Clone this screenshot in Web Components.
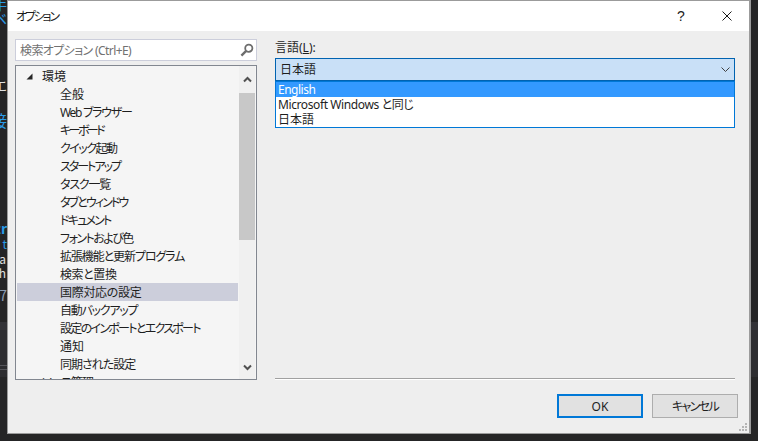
<!DOCTYPE html>
<html lang="ja">
<head>
<meta charset="utf-8">
<title>オプション</title>
<style>
html, body { margin: 0; height: 100%; background: #252526; overflow: hidden; }
body { font: 12px/15px "Noto Sans", "Noto Sans CJK JP", sans-serif; font-feature-settings: "palt"; color: #1e1e1e; }
</style>
</head>
<body>
<ide-backdrop>
  <opt-dialog heading="オプション">
    <opt-search slot="left" placeholder="検索オプション (Ctrl+E)"></opt-search>
    <opt-tree slot="left">
      <opt-tree-item level="0" expanded>環境</opt-tree-item>
      <opt-tree-item>全般</opt-tree-item>
      <opt-tree-item style="letter-spacing:-1.3px">Web ブラウザー</opt-tree-item>
      <opt-tree-item style="letter-spacing:-2.6px">キーボード</opt-tree-item>
      <opt-tree-item style="letter-spacing:-1.5px">クイック起動</opt-tree-item>
      <opt-tree-item style="letter-spacing:-2px">スタートアップ</opt-tree-item>
      <opt-tree-item style="letter-spacing:-1.2px">タスク一覧</opt-tree-item>
      <opt-tree-item style="letter-spacing:-1.9px">タブとウィンドウ</opt-tree-item>
      <opt-tree-item style="letter-spacing:-1.8px">ドキュメント</opt-tree-item>
      <opt-tree-item style="letter-spacing:-1.5px">フォントおよび色</opt-tree-item>
      <opt-tree-item style="letter-spacing:-1.1px">拡張機能と更新プログラム</opt-tree-item>
      <opt-tree-item style="letter-spacing:-.4px">検索と置換</opt-tree-item>
      <opt-tree-item selected style="letter-spacing:-.3px">国際対応の設定</opt-tree-item>
      <opt-tree-item style="letter-spacing:-1.25px">自動バックアップ</opt-tree-item>
      <opt-tree-item style="letter-spacing:-1.7px">設定のインポートとエクスポート</opt-tree-item>
      <opt-tree-item>通知</opt-tree-item>
      <opt-tree-item style="letter-spacing:-1px">同期された設定</opt-tree-item>
      <opt-tree-item level="0" style="letter-spacing:-1px">ソース管理</opt-tree-item>
    </opt-tree>
    <opt-combo slot="right" value="日本語">
      <span slot="label">言語(<u>L</u>):</span>
      <opt-combo-item selected style="letter-spacing:-.5px">English</opt-combo-item>
      <opt-combo-item style="letter-spacing:-.4px">Microsoft Windows と同じ</opt-combo-item>
      <opt-combo-item>日本語</opt-combo-item>
    </opt-combo>
    <opt-button slot="buttons" primary>OK</opt-button>
    <opt-button slot="buttons" style="letter-spacing:-1.6px">キャンセル</opt-button>
  </opt-dialog>
</ide-backdrop>

<script>
class IdeBackdrop extends HTMLElement {
    constructor(){
        super();
        this.attachShadow({mode: 'open'});
        this.shadowRoot.innerHTML = `
            <style>
                :host { display: block; position: relative; width: 758px; height: 441px; overflow: hidden; background: #252526; }
                .t { position: absolute; right: 751px; white-space: nowrap; font: 14px/18px "Noto Sans CJK JP", sans-serif; }
                .blue { color: #2a9be8; }
                .white { color: #e0e0e0; }
                .band { position: absolute; left: 0; right: 0; background: #333337; }
                .dark { position: absolute; left: 0; right: 0; background: #2d2d30; }
                .tick { position: absolute; left: 0; width: 7px; height: 1px; background: #55555a; }
            </style>
            <div class="dark" style="top:330px;height:47px"></div>
            <div class="band" style="top:322px;height:8px"></div>
            <div class="tick" style="top:365px"></div>
            <div class="tick" style="top:369px"></div>
            <span class="t blue" style="top:-5px">手</span>
            <span class="t blue" style="top:9px">ベ</span>
            <span class="t white" style="top:76px">エ</span>
            <span class="t blue" style="top:111px;font-size:16px">接</span>
            <span class="t blue" style="top:219px;font-weight:700">tr</span>
            <span class="t blue" style="top:235px;font-size:12px">g t</span>
            <span class="t white" style="top:250px;font-size:12px;right:752px">a</span>
            <span class="t white" style="top:264px;font-size:12px;right:752px">h</span>
            <span class="t white" style="top:286px;color:#8a9ab0">7</span>
            <slot></slot>
        `;
    }
}
customElements.define('ide-backdrop', IdeBackdrop);

class OptDialog extends HTMLElement {
    constructor(){
        super();
        this.attachShadow({mode: 'open'});
        this.shadowRoot.innerHTML = `
            <style>
                :host { position: absolute; left: 7px; top: 0; width: 744px; height: 434px; box-sizing: border-box;
                    border: 1px solid #9b9b9b; border-right-width: 2px; border-bottom-width: 1px; background: #eeeeee;
                    display: flex; flex-direction: column; }
                header { height: 30px; background: #fff; display: flex; align-items: center; padding-left: 8px; font-size: 12px; flex: none; }
                header span { flex: 1; letter-spacing: -2.200px; }
                .cap { width: 36px; height: 30px; display: flex; align-items: center; justify-content: center; font: 14px "Liberation Sans", sans-serif; color: #222; }
                .main { flex: 1; display: flex; padding: 8px 14px 0 7px; gap: 18px; min-height: 0; }
                .left { width: 242px; flex: none; display: flex; flex-direction: column; gap: 4px; }
                .right { flex: 1; }
                .foot { flex: none; height: 55px; padding: 0 14px 0 267px; position: relative; }
                .foot hr { margin: 0; height: 1px; border: 0; background: #a0a0a0; box-shadow: 0 1px 0 #fff; }
                .btns { display: flex; justify-content: flex-end; gap: 9px; margin: 15px -3px 0 0; }
                .grip { position: absolute; right: 1px; bottom: 1px; }
            </style>
            <header>
                <span></span>
                <div class="cap">?</div>
                <div class="cap" style="margin-right:4px;margin-left:10px">
                    <svg width="10" height="10" viewBox="0 0 10 10"><path d="M.5.5l9 9M9.500.5l-9 9" stroke="#1a1a1a" fill="none"/></svg>
                </div>
            </header>
            <div class="main">
                <div class="left"><slot name="left"></slot></div>
                <div class="right"><slot name="right"></slot></div>
            </div>
            <div class="foot">
                <hr>
                <div class="btns"><slot name="buttons"></slot></div>
                <svg class="grip" width="9" height="9" viewBox="0 0 9 9" fill="#b4b4b4">
                    <rect x="6" y="0" width="2" height="2"/><rect x="3" y="3" width="2" height="2"/><rect x="6" y="3" width="2" height="2"/>
                    <rect x="0" y="6" width="2" height="2"/><rect x="3" y="6" width="2" height="2"/><rect x="6" y="6" width="2" height="2"/>
                </svg>
            </div>
        `;
        this.shadowRoot.querySelector('header span').textContent = this.getAttribute('heading');
    }
}
customElements.define('opt-dialog', OptDialog);

class OptSearch extends HTMLElement {
    constructor(){
        super();
        this.attachShadow({mode: 'open'});
        this.shadowRoot.innerHTML = `
            <style>
                :host { display: flex; align-items: center; box-sizing: border-box; height: 22px; border: 1px solid #cccedb; background: #fff; padding: 0 2px 0 4px; color: #717171; flex: none; }
                span { flex: 1; letter-spacing: -.6px; }
            </style>
            <span></span>
            <svg width="14" height="14" viewBox="0 0 14 14">
                <circle cx="8.8" cy="5.2" r="3.6" fill="none" stroke="#6d6d6d" stroke-width="1.8"/>
                <path d="M6.2 7.8L1.4 12.6" stroke="#6d6d6d" stroke-width="2.4" fill="none"/>
            </svg>
        `;
        this.shadowRoot.querySelector('span').textContent = this.getAttribute('placeholder');
    }
}
customElements.define('opt-search', OptSearch);

class OptTree extends HTMLElement {
    constructor(){
        super();
        this.attachShadow({mode: 'open'});
        this.shadowRoot.innerHTML = `
            <style>
                :host { display: flex; box-sizing: border-box; height: 315px; border: 1px solid #828790; background: #f5f5f5; overflow: hidden; flex: none; }
                .rows { flex: 1; min-width: 0; padding: 1px 0 0 1px; overflow: hidden; }
                .bar { width: 16px; flex: none; margin: 0 1px 0 1px; background: #f0f0f0; display: flex; flex-direction: column; }
                .arrow { height: 27px; flex: none; display: flex; align-items: center; justify-content: center; }
                .thumb { height: 147px; background: #c8c8c8; flex: none; }
                .rest { flex: 1; }
            </style>
            <div class="rows"><slot></slot></div>
            <div class="bar">
                <div class="arrow"><svg width="9" height="7" viewBox="0 0 9 7"><path d="M1 5.5l3.5-3.5 3.5 3.5" fill="none" stroke="#505050" stroke-width="2"/></svg></div>
                <div class="thumb"></div>
                <div class="rest"></div>
                <div class="arrow" style="height:24px"><svg width="9" height="7" viewBox="0 0 9 7"><path d="M1 1.5l3.5 3.5 3.5-3.5" fill="none" stroke="#505050" stroke-width="2"/></svg></div>
            </div>
        `;
    }
}
customElements.define('opt-tree', OptTree);

class OptTreeItem extends HTMLElement {
    constructor(){
        super();
        this.attachShadow({mode: 'open'});
        this.shadowRoot.innerHTML = `
            <style>
                :host { display: flex; align-items: center; height: 18px; white-space: nowrap; padding-left: 43px; }
                :host([level="0"]) { padding-left: 9px; }
                :host([selected]) { background: #cccedb; }
                .tw { display: none; width: 7px; height: 7px; margin-right: 9px; flex: none; }
                :host([level="0"]) .tw { display: block; }
            </style>
            <svg class="tw" viewBox="0 0 7 7"></svg>
            <slot></slot>
        `;
        this.shadowRoot.querySelector('svg').innerHTML = this.hasAttribute('expanded')
            ? '<path d="M6.5 .5v6h-6z" fill="#262626"/>'
            : '<path d="M1.5 .5l4 3-4 3z" fill="none" stroke="#808080"/>';
    }
}
customElements.define('opt-tree-item', OptTreeItem);

class OptCombo extends HTMLElement {
    constructor(){
        super();
        this.attachShadow({mode: 'open'});
        this.shadowRoot.innerHTML = `
            <style>
                :host { display: block; position: relative; }
                .label { display: block; height: 19px; line-height: 17px; }
                .field { box-sizing: border-box; height: 23px; border: 1px solid #0063b1; background: #c9e0f7; display: flex; align-items: center; padding: 0 4px 0 4px; }
                .field span { flex: 1; }
                .list { position: absolute; left: 0; right: 0; top: 42px; box-sizing: border-box; height: 47px; border: 1px solid #0078d7; background: #fff; }
            </style>
            <slot class="label" name="label"></slot>
            <div class="field">
                <span></span>
                <svg width="9" height="5" viewBox="0 0 9 5"><path d="M.5.5l4 4 4-4" fill="none" stroke="#404040"/></svg>
            </div>
            <div class="list"><slot></slot></div>
        `;
        this.shadowRoot.querySelector('.field span').textContent = this.getAttribute('value');
    }
}
customElements.define('opt-combo', OptCombo);

class OptComboItem extends HTMLElement {
    constructor(){
        super();
        this.attachShadow({mode: 'open'});
        this.shadowRoot.innerHTML = `
            <style>
                :host { display: block; height: 15px; line-height: 15px; padding-left: 2px; white-space: nowrap; }
                :host([selected]) { background: #3399ff; color: #fff; }
            </style>
            <slot></slot>
        `;
    }
}
customElements.define('opt-combo-item', OptComboItem);

class OptButton extends HTMLElement {
    constructor(){
        super();
        this.attachShadow({mode: 'open'});
        this.shadowRoot.innerHTML = `
            <style>
                :host { display: flex; align-items: center; justify-content: center; box-sizing: border-box; width: 86px; height: 24px; background: #e1e1e1; border: 1px solid #adadad; }
                :host([primary]) { border: 2px solid #0078d7; }
            </style>
            <slot></slot>
        `;
    }
}
customElements.define('opt-button', OptButton);
</script>
</body>
</html>
